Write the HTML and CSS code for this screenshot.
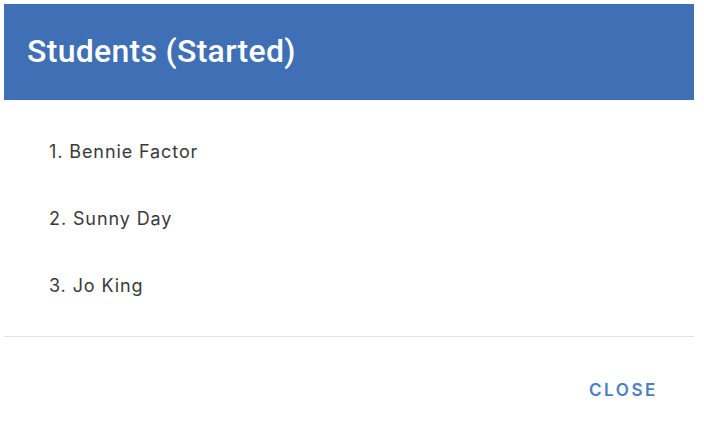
FILE: index.html
```html
<!DOCTYPE html>
<html>
<head>
<meta charset="utf-8">
<link rel="stylesheet" href="styles.css">
</head>
<body>
<div class="dialog">
  <div class="header"><h1 class="title">Students (Started)</h1></div>
  <ol class="list">
    <li class="item">1. Bennie Factor</li>
    <li class="item">2. Sunny Day</li>
    <li class="item">3. Jo King</li>
  </ol>
  <div class="footer"><button class="close">CLOSE</button></div>
</div>
</body>
</html>
```
FILE: styles.css
```css
html, body { margin: 0; padding: 0; background: #fff; }
.dialog { margin: 4px 10px 0 4px; width: 690px; }
.header { background: #3f6fb4; height: 96px; display: flex; align-items: center; padding: 0 23px 2px; box-sizing: border-box; }
.title { margin: 0; color: #fff; font-family: Roboto, sans-serif; font-weight: 500; font-size: 32px; letter-spacing: 0.3px; }
.list { list-style: none; margin: 0; padding: 41px 0 39px 45px; border-bottom: 1px solid #e2e2e2; display: flex; flex-direction: column; gap: 45px; }
.item { font-family: Inter, "Noto Sans", sans-serif; font-size: 18px; color: #3a3a3a; line-height: 22px; letter-spacing: 0.9px; }
.footer { display: flex; justify-content: flex-end; padding: 43px 36px 0 0; }
.close { background: none; border: none; padding: 0; font-family: Inter, sans-serif; font-weight: 600; font-size: 17px; letter-spacing: 2.6px; color: #4a7fc1; }
```
